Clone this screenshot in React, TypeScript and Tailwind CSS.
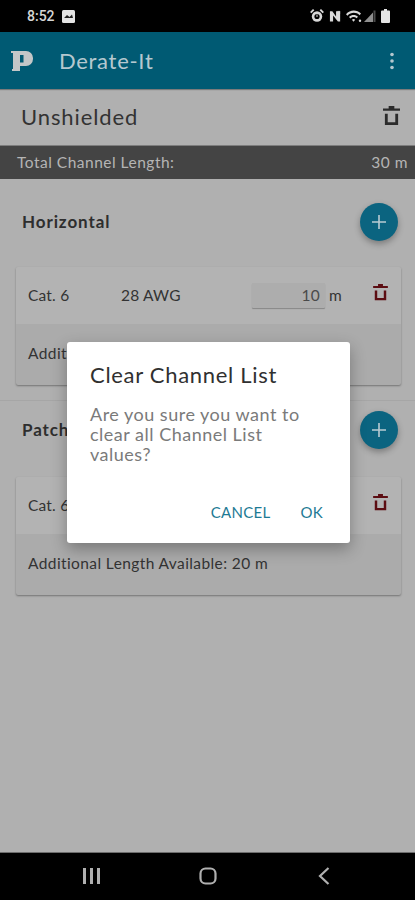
const font = { fontFamily: 'Lato, "Open Sans", sans-serif' }

function Trash({ className }: { className: string }) {
  return (
    <svg viewBox="0 0 18 22" className={className} fill="currentColor">
      <path d="M6 0h6v2.5h6v2.5H0V2.5h6z" />
      <path d="M2 8h3v9h8V8h3v12H2z" />
    </svg>
  )
}

function Fab() {
  return (
    <button className="flex h-[38px] w-[38px] items-center justify-center rounded-full bg-[#0b6480] shadow-[0_3px_6px_rgba(0,0,0,0.3)]">
      <svg viewBox="0 0 18 18" className="h-[18px] w-[18px]" stroke="#b9cbd2" strokeWidth="1.6">
        <path d="M9 2v14M2 9h14" />
      </svg>
    </button>
  )
}

function StatusIcons() {
  return (
    <div className="flex items-center gap-[3px] text-[#d8d8d8]">
      {/* alarm */}
      <svg viewBox="0 0 14 14" className="h-[14px] w-[14px]" fill="currentColor">
        <circle cx="7" cy="7.5" r="5.2" />
        <path d="M0 3l3-3 1.4 1.2-3 3zM14 3l-3-3-1.4 1.2 3 3z" />
        <circle cx="7" cy="7.5" r="2.6" fill="#000" />
        <path d="M6.5 5.5h1v2.6h-1z" />
      </svg>
      {/* NFC / mute */}
      <svg viewBox="0 0 14 14" className="ml-[2px] h-[14px] w-[13px]" fill="currentColor">
        <path d="M1 2h2.6l4 5.5V2H12v11H9.6L4.4 6.4V13H1z" />
        <path d="M9 1.5h3V5H9z" opacity="0.7" />
      </svg>
      {/* wifi */}
      <svg viewBox="0 0 17 13" className="ml-[1px] h-[13px] w-[17px]" fill="currentColor">
        <path d="M0 4.2C4-.6 11-.6 15 3.6l-1.4 1.6C10.200 2 5 2 1.500 5.700z" />
        <path d="M3 7C5.600 4.400 9.600 4.400 12 6.800l-1.400 1.500C8.800 6.700 6.300 6.700 4.500 8.500z" />
        <path d="M5.900 9.800c1-1 2.300-1 3.300 0L7.500 11.800z" />
        <circle cx="14" cy="10.800" r="1.200" />
      </svg>
      {/* signal */}
      <svg viewBox="0 0 12 12" className="-ml-[2px] h-[12px] w-[12px]">
        <path d="M0 12L9 2.500V12z" fill="#8f8f8f" />
        <path d="M9.500 0.500H11.500V12H9.500z" fill="#4a4a4a" />
      </svg>
      {/* battery */}
      <svg viewBox="0 0 9 14" className="ml-[2px] h-[14px] w-[9px]" fill="#e4e4e4">
        <path d="M3 0h3v1.500h2a1 1 0 0 1 1 1V13a1 1 0 0 1-1 1H1a1 1 0 0 1-1-1V2.500a1 1 0 0 1 1-1h2z" />
      </svg>
    </div>
  )
}

function ChannelCard({ name, extra, awg }: { name: string; extra: string; awg: string }) {
  return (
    <div className="ml-4 mr-[14px] overflow-hidden rounded-[2px] bg-[#ababab] shadow-[0_1px_2px_rgba(0,0,0,0.35)]">
      <div className="flex h-[57px] items-center bg-[#b3b3b3] pl-3 pr-[13px] text-[15.5px] tracking-[0.2px] text-[#333]">
        <span className="w-[93px]">{name}</span>
        <span>{awg}</span>
        <div className="ml-auto flex h-[25px] w-[73px] items-center justify-end rounded-[1px] bg-[#adadad] pr-[5px] text-[#4a4a4a] shadow-[0_1px_1px_rgba(0,0,0,0.25)]">
          10
        </div>
        <span className="ml-[4px] w-[14px]">m</span>
        <Trash className="mb-[6px] ml-[30px] h-[18px] w-[15px] text-[#5c0d12]" />
      </div>
      <div className="flex h-[61px] items-start pl-3 pt-[19px] text-[15.5px] leading-5 tracking-[0.4px] text-[#333]">{extra}</div>
    </div>
  )
}

export default function App() {
  return (
    <div className="relative flex h-[900px] w-[415px] flex-col overflow-hidden bg-[#b0b0b0]" style={font}>
      <div className="flex h-[32px] shrink-0 items-center justify-between bg-black pl-[27px] pr-[25px]">
        <div className="flex items-center gap-[7px]">
          <span className="text-[14px] font-medium text-[#d5d5d5]" style={{ fontFamily: 'Roboto, sans-serif' }}>8:52</span>
          <svg viewBox="0 0 13 13" className="h-[13px] w-[13px]">
            <rect width="13" height="13" rx="1.500" fill="#e4e4e4" />
            <path d="M2 8l3-3 2.500 2L10 4.500 11 8z" fill="#222" />
          </svg>
        </div>
        <StatusIcons />
      </div>

      <div className="flex h-[57px] shrink-0 items-center bg-[#005a73] pl-[11px] pr-[21px] shadow-[0_1px_1px_rgba(0,0,0,0.3)]">
        <svg viewBox="0 0 22 20" className="h-[20px] w-[22px]">
          <path d="M0 0h15a7 7 0 0 1 7 7v1a7 7 0 0 1-7 7H9v5H1V18h1V2H0z" fill="#c3c7c8" />
          <rect x="9" y="4" width="3.500" height="7.500" fill="#005a73" />
        </svg>
        <span className="ml-[26px] text-[22px] tracking-[0.7px] text-[#b5c8cf]">Derate-It</span>
        <svg viewBox="0 0 4 18" className="ml-auto h-[18px] w-[4px]" fill="#b5c8cf">
          <circle cx="2" cy="2.500" r="1.800" />
          <circle cx="2" cy="9" r="1.800" />
          <circle cx="2" cy="15.500" r="1.800" />
        </svg>
      </div>

      <div className="flex h-[56px] shrink-0 items-center justify-between pb-[2px] pl-[21px] pr-[15px]">
        <span className="text-[22px] tracking-[0.9px] text-[#333]">Unshielded</span>
        <Trash className="h-[21px] w-[17px] text-[#2b2b2b]" />
      </div>

      <div className="flex h-[34px] shrink-0 items-center justify-between border-t border-[#7d7d7d] bg-[#444444] pl-[17px] pr-[7px] text-[15.5px] tracking-[0.5px] text-[#b5b5b5]">
        <span>Total Channel Length:</span>
        <span>30 m</span>
      </div>

      <div className="flex h-[88px] shrink-0 items-center justify-between pb-[2px] pl-[22px] pr-[17px]">
        <span className="text-[17px] font-bold tracking-[0.9px] text-[#2e2e2e]">Horizontal</span>
        <Fab />
      </div>
      <ChannelCard name="Cat. 6" awg="28 AWG" extra="Additional Length Available: 20 m" />

      <div className="mt-[15px] flex h-[77px] shrink-0 items-center justify-between border-t border-[#a6a6a6] pb-[18px] pl-[22px] pr-[17px]">
        <span className="text-[17px] font-bold tracking-[0.9px] text-[#2e2e2e]">Patch</span>
        <Fab />
      </div>
      <ChannelCard name="Cat. 6" awg="28 AWG" extra="Additional Length Available: 20 m" />

      <div className="mt-auto flex h-[48px] shrink-0 items-center justify-between border-t border-[#6d6d6d] bg-black pb-[1px] pl-[83px] pr-[85px]">
        <svg viewBox="0 0 18 16" className="h-[16px] w-[18px]" fill="#b0b0b0">
          <rect x="0" width="3" height="16" />
          <rect x="7" width="3" height="16" />
          <rect x="14" width="3" height="16" />
        </svg>
        <svg viewBox="0 0 18 18" className="mr-[4px] h-[18px] w-[18px]" fill="none" stroke="#b0b0b0" strokeWidth="2.200">
          <rect x="1.500" y="1.500" width="15" height="15" rx="5" />
        </svg>
        <svg viewBox="0 0 12 18" className="h-[18px] w-[12px]" fill="none" stroke="#b0b0b0" strokeWidth="2.200">
          <path d="M10.500 1L2 9l8.500 8" />
        </svg>
      </div>

      <div className="absolute left-[67px] top-[342px] h-[201px] w-[283px] rounded-[3px] bg-white pl-[23px] pr-[25px] pt-[19px] shadow-[0_6px_16px_rgba(0,0,0,0.3)]">
        <h2 className="text-[22px] leading-[28px] tracking-[0.7px] text-[#303030]">Clear Channel List</h2>
        <p className="mt-[15px] text-[18px] leading-[20px] tracking-[0.5px] text-[#7a7a7a]">
          Are you sure you want to
          <br />
          clear all Channel List
          <br />
          values?
        </p>
        <div className="mt-[37px] flex justify-end gap-[30px] pr-[2px] text-[15px] tracking-[0.3px] text-[#1d7a94]">
          <span>CANCEL</span>
          <span>OK</span>
        </div>
      </div>
    </div>
  )
}
